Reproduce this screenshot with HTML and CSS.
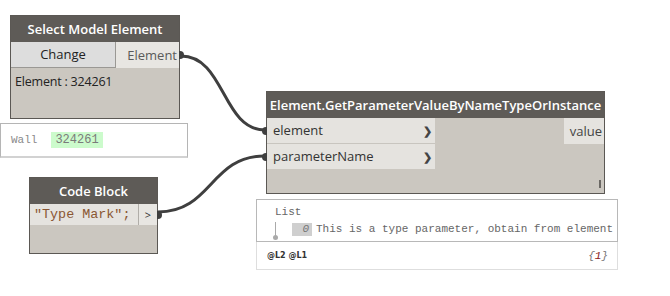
FILE: index.html
```html
<!DOCTYPE html>
<html lang="en">
<head>
    <meta charset="UTF-8">
    <title>Dynamo Graph</title>
    <link rel="stylesheet" href="styles.css">
</head>
<body>

    <div class="canvas">

        <!-- Wires -->
        <svg class="wires" width="670" height="296" viewBox="0 0 670 296">
            <path d="M181 56 C 225 56, 222 130, 265 130" />
            <path d="M158 212 C 212 212, 210 156, 265 156" />
        </svg>

        <!-- Select Model Element -->
        <div class="node node-select">
            <div class="node-header">Select Model Element</div>
            <div class="port-row">
                <div class="change-btn">Change</div>
                <div class="out-port">Element<span class="nub nub-out"></span></div>
            </div>
            <div class="node-body">
                <div class="node-value">Element : 324261</div>
            </div>
        </div>

        <div class="watch">
            <span class="watch-key">Wall</span>
            <span class="watch-id">324261</span>
        </div>

        <!-- Code Block -->
        <div class="node node-code">
            <div class="node-header">Code Block</div>
            <div class="code-row">
                <div class="code-text">"Type Mark";</div>
                <div class="code-out">&gt;<span class="nub nub-out"></span></div>
            </div>
            <div class="node-body"></div>
        </div>

        <!-- Element.GetParameterValueByNameTypeOrInstance -->
        <div class="node node-param">
            <div class="node-header">Element.GetParameterValueByNameTypeOrInstance</div>
            <div class="param-grid">
                <div class="inputs">
                    <div class="in-port"><span class="nub nub-in"></span>element<span class="chev">&#x276F;</span></div>
                    <div class="in-port"><span class="nub nub-in"></span>parameterName<span class="chev">&#x276F;</span></div>
                </div>
                <div class="outputs">
                    <div class="out-label">value</div>
                </div>
            </div>
            <div class="param-foot"><span class="grip"></span></div>
        </div>

        <div class="preview">
            <div class="preview-main">
                <div class="list-title">List</div>
                <div class="list-item">
                    <span class="tree"><span class="tree-dot"></span></span>
                    <span class="index">0</span>
                    <span class="item-text">This is a type parameter, obtain from element</span>
                </div>
            </div>
            <div class="preview-foot">
                <span class="levels">@L2 @L1</span>
                <span class="count">{<b>1</b>}</span>
            </div>
        </div>

    </div>

</body>
</html>
```

FILE: styles.css
```css
body {
    margin: 0;
    background-color: #ffffff;
    font-family: "Open Sans", Arial, sans-serif;
}
.canvas {
    position: relative;
    width: 670px;
    height: 296px;
    overflow: hidden;
}
.wires {
    position: absolute;
    left: 0;
    top: 0;
    z-index: 0;
}
.wires path {
    fill: none;
    stroke: #3f3f3f;
    stroke-width: 3;
}

/* Nodes */
.node {
    position: absolute;
    z-index: 1;
    border: 1px solid #5b5854;
    background-color: #cbc7c0;
    display: flex;
    flex-direction: column;
}
.node-header {
    background-color: #5e5b57;
    color: #ffffff;
    font-weight: 600;
    font-size: 13px;
    text-align: center;
    height: 26px;
    line-height: 26px;
    white-space: nowrap;
}
.nub {
    position: absolute;
    width: 5px;
    height: 8px;
    background-color: #3f3f3f;
    top: 50%;
    margin-top: -4px;
}
.nub-out {
    right: -5px;
    border-radius: 0 4px 4px 0;
}
.nub-in {
    left: -5px;
    border-radius: 4px 0 0 4px;
}

.node-select {
    left: 10px;
    top: 15px;
    width: 168px;
    height: 102px;
}
.port-row {
    display: flex;
    height: 26px;
}
.change-btn {
    width: 105px;
    background-color: #dddddd;
    border-right: 1px solid #9a9894;
    border-bottom: 1px solid #9a9894;
    box-sizing: border-box;
    text-align: center;
    font-size: 13px;
    line-height: 25px;
    color: #222;
}
.out-port {
    position: relative;
    flex: 1;
    background-color: #e8e6e2;
    text-align: right;
    padding-right: 2px;
    font-size: 13px;
    line-height: 26px;
    color: #5a5a5a;
}
.node-body {
    flex: 1;
}
.node-value {
    font-size: 12.5px;
    color: #222;
    padding: 5px 4px;
    letter-spacing: -0.2px;
}

.watch {
    position: absolute;
    left: 0;
    top: 123px;
    width: 176px;
    height: 32px;
    border: 1px solid #b5b5b5;
    border-bottom: 2px solid #d2d2d2;
    background-color: #ffffff;
    font-family: "Liberation Mono", monospace;
    font-size: 11px;
    display: flex;
    align-items: center;
    padding-left: 10px;
    z-index: 1;
}
.watch-key {
    color: #8a8a8a;
    margin-right: 14px;
}
.watch-id {
    background-color: #ccfbcc;
    color: #7a7a7a;
    padding: 1px 4px;
    font-size: 12px;
}

/* Code block */
.node-code {
    left: 29px;
    top: 177px;
    width: 127px;
    height: 75px;
}
.code-row {
    display: flex;
    height: 21px;
    background-color: #e5e3df;
}
.code-text {
    flex: 1;
    font-family: "Liberation Mono", monospace;
    font-size: 13.4px;
    line-height: 21px;
    color: #8a5733;
    padding-left: 4px;
    border-right: 1px solid #b0ada8;
    white-space: nowrap;
}
.code-out {
    position: relative;
    width: 18px;
    font-size: 11px;
    text-align: center;
    line-height: 21px;
    color: #333;
    background-color: #e8e6e2;
}

/* Parameter node */
.node-param {
    left: 266px;
    top: 91px;
    width: 337px;
    height: 101px;
}
.param-grid {
    display: flex;
    justify-content: space-between;
}
.inputs {
    width: 168px;
    display: flex;
    flex-direction: column;
}
.in-port {
    position: relative;
    height: 25px;
    background-color: #e5e3df;
    font-size: 13px;
    line-height: 25px;
    color: #333;
    padding-left: 6px;
    display: flex;
    justify-content: space-between;
}
.in-port + .in-port {
    border-top: 1px solid #c8c5bf;
}
.chev {
    font-size: 11px;
    font-weight: bold;
    color: #444;
    padding-right: 3px;
}
.out-label {
    background-color: #e5e3df;
    font-size: 13px;
    line-height: 26px;
    height: 26px;
    color: #444;
    padding: 0 2px 0 6px;
}
.param-foot {
    flex: 1;
    display: flex;
    justify-content: flex-end;
    align-items: flex-end;
    padding: 0 3px 5px 0;
}
.grip {
    width: 2px;
    height: 8px;
    background-color: #6b6864;
}

/* Preview */
.preview {
    position: absolute;
    left: 256px;
    top: 199px;
    width: 362px;
    z-index: 1;
    font-family: "Liberation Mono", monospace;
    font-size: 11px;
    color: #666;
}
.preview-main {
    border: 1px solid #b8b8b8;
    height: 43px;
    padding-left: 18px;
    padding-top: 6px;
    box-sizing: border-box;
}
.list-title {
    line-height: 13px;
}
.list-item {
    display: flex;
    align-items: center;
    line-height: 13px;
    margin-top: 3px;
}
.tree {
    position: relative;
    width: 1px;
    height: 14px;
    background-color: #aaa;
    margin-left: 0;
    margin-right: 16px;
}
.tree-dot {
    position: absolute;
    left: -2px;
    bottom: -4px;
    width: 5px;
    height: 5px;
    border-radius: 50%;
    background-color: #aaa;
}
.index {
    background-color: #cfcfcf;
    color: #777;
    font-style: italic;
    width: 20px;
    padding-right: 3px;
    box-sizing: border-box;
    text-align: right;
    margin-right: 4px;
}
.item-text {
    white-space: nowrap;
}
.preview-foot {
    border: 1px solid #dedede;
    border-top: none;
    height: 27px;
    display: flex;
    justify-content: space-between;
    align-items: center;
    padding: 0 9px 0 10px;
}
.levels {
    font-family: "DejaVu Sans", sans-serif;
    font-size: 8px;
    font-weight: bold;
    color: #333;
}
.count {
    font-style: italic;
    color: #777;
    font-size: 11px;
}
.count b {
    color: #8b1a1a;
    font-weight: normal;
}
```
